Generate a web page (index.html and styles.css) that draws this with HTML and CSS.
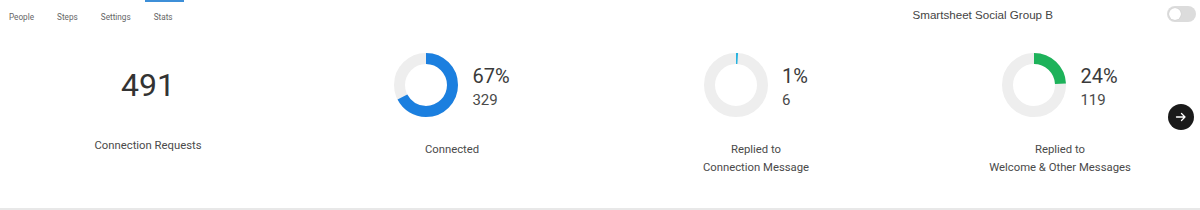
FILE: index.html
```html
<!DOCTYPE html>
<html lang="en">
<head>
<meta charset="utf-8">
<title>Stats</title>
<link rel="stylesheet" href="styles.css">
</head>
<body>
<div class="page">
  <header class="topbar">
    <nav class="tabs">
      <a class="tab">People</a>
      <a class="tab">Steps</a>
      <a class="tab">Settings</a>
      <a class="tab tab-active">Stats</a>
    </nav>
    <div class="group">
      <span class="group-name">Smartsheet Social Group B</span>
      <span class="toggle"><span class="knob"></span></span>
    </div>
  </header>

  <section class="stats">
    <div class="stat">
      <div class="visual">
        <div class="big-number">491</div>
      </div>
      <div class="label label-first">Connection Requests</div>
    </div>

    <div class="stat">
      <div class="visual">
        <svg class="donut" width="64" height="64" viewBox="0 0 64 64">
          <circle cx="32" cy="32" r="26.5" fill="none" stroke="#eeeeee" stroke-width="11"/>
          <circle cx="32" cy="32" r="26.5" fill="none" stroke="#1b7fdf" stroke-width="11"
            stroke-dasharray="111.56 166.50" transform="rotate(-90 32 32)"/>
        </svg>
        <div class="figures">
          <div class="pct">67%</div>
          <div class="count">329</div>
        </div>
      </div>
      <div class="label">Connected</div>
    </div>

    <div class="stat">
      <div class="visual">
        <svg class="donut" width="64" height="64" viewBox="0 0 64 64">
          <circle cx="32" cy="32" r="26.5" fill="none" stroke="#eeeeee" stroke-width="11"/>
          <circle cx="32" cy="32" r="26.5" fill="none" stroke="#27b3df" stroke-width="11"
            stroke-dasharray="1.8 166.50" transform="rotate(-90 32 32)"/>
        </svg>
        <div class="figures">
          <div class="pct">1%</div>
          <div class="count">6</div>
        </div>
      </div>
      <div class="label">Replied to<br>Connection Message</div>
    </div>

    <div class="stat">
      <div class="visual">
        <svg class="donut" width="64" height="64" viewBox="0 0 64 64">
          <circle cx="32" cy="32" r="26.5" fill="none" stroke="#eeeeee" stroke-width="11"/>
          <circle cx="32" cy="32" r="26.5" fill="none" stroke="#1db25a" stroke-width="11"
            stroke-dasharray="39.96 166.50" transform="rotate(-90 32 32)"/>
        </svg>
        <div class="figures">
          <div class="pct">24%</div>
          <div class="count">119</div>
        </div>
      </div>
      <div class="label">Replied to<br>Welcome &amp; Other Messages</div>
    </div>

    <button class="next" aria-label="Next">
      <svg width="12" height="12" viewBox="0 0 12 12">
        <path d="M1.5 6 H10 M6.5 2.5 L10 6 L6.5 9.5" fill="none" stroke="#ffffff" stroke-width="1.3" stroke-linecap="round" stroke-linejoin="round"/>
      </svg>
    </button>
  </section>
</div>
</body>
</html>
```

FILE: styles.css
```css
* { box-sizing: border-box; }

html, body {
  margin: 0;
  padding: 0;
  background: #ffffff;
}

.page {
  width: 1200px;
  height: 210px;
  border-bottom: 2px solid #e8e8e8;
  font-family: Roboto, "Liberation Sans", sans-serif;
  color: #444;
}

.topbar {
  height: 30px;
  display: flex;
  justify-content: space-between;
  align-items: flex-start;
}

.tabs {
  display: flex;
  gap: 5px;
}

.tab {
  display: block;
  padding: 9px 9px 0;
  height: 30px;
  font-size: 8.2px;
  line-height: 12px;
  color: #666;
  border-top: 2px solid transparent;
}

.tab-active {
  border-top-color: #3d8fd8;
  padding-left: 9px;
  padding-right: 11px;
}

.group {
  display: flex;
  align-items: center;
  height: 28px;
  padding-right: 4px;
}

.group-name {
  font-family: "Liberation Sans", Arial, sans-serif;
  font-size: 11.6px;
  color: #444;
  margin-right: 114px;
}

.toggle {
  position: relative;
  display: block;
  width: 29px;
  height: 16px;
  border-radius: 8px;
  background: #dcdcdc;
}

.knob {
  position: absolute;
  left: 2px;
  top: 2px;
  width: 12px;
  height: 12px;
  border-radius: 50%;
  background: #ffffff;
  box-shadow: 0 0 1px rgba(0,0,0,0.2);
}

.stats {
  position: relative;
  display: grid;
  grid-template-columns: repeat(4, 296px);
  column-gap: 8px;
  padding-top: 23px;
}

.stat {
  display: flex;
  flex-direction: column;
  align-items: center;
}

.visual {
  display: flex;
  align-items: flex-start;
  height: 64px;
}

.donut {
  display: block;
  flex: none;
}

.figures {
  margin-left: 14px;
  margin-top: 11px;
  display: flex;
  flex-direction: column;
  gap: 2px;
}

.pct {
  font-size: 20px;
  line-height: 24px;
  color: #3a3a3a;
}

.count {
  font-size: 15px;
  line-height: 20px;
  color: #4a4a4a;
}

.big-number {
  margin-top: 12px;
  font-size: 32px;
  line-height: 40px;
  color: #333;
}

.label {
  margin-top: 24px;
  font-size: 11.3px;
  line-height: 18px;
  color: #4a4a4a;
  text-align: center;
}

.label-first {
  margin-top: 20px;
}

.next {
  position: absolute;
  left: 1168px;
  top: 74px;
  width: 26px;
  height: 26px;
  border: none;
  border-radius: 50%;
  background: #1a1a1a;
  padding: 0;
  display: flex;
  align-items: center;
  justify-content: center;
}
```
